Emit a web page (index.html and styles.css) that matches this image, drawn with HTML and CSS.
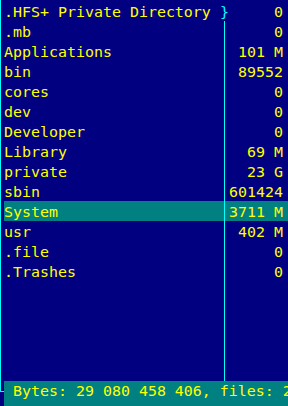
FILE: index.html
```html
<!DOCTYPE html>
<html lang="en">
<head>
 <meta charset="UTF-8">
 <meta name="viewport" content="width=device-width, initial-scale=1.0">
 <title>Panel</title>
 <link rel="stylesheet" href="styles.css">
</head>
<body>
 <div class="panel">
 <div class="row"><span class="name">.HFS+ Private Directory </span><span class="sep mark">}</span><span class="size">0</span></div>
 <div class="row"><span class="name">.mb</span><span class="sep"></span><span class="size">0</span></div>
 <div class="row"><span class="name">Applications</span><span class="sep"></span><span class="size">101 M</span></div>
 <div class="row"><span class="name">bin</span><span class="sep"></span><span class="size">89552</span></div>
 <div class="row"><span class="name">cores</span><span class="sep"></span><span class="size">0</span></div>
 <div class="row"><span class="name">dev</span><span class="sep"></span><span class="size">0</span></div>
 <div class="row"><span class="name">Developer</span><span class="sep"></span><span class="size">0</span></div>
 <div class="row"><span class="name">Library</span><span class="sep"></span><span class="size">69 M</span></div>
 <div class="row"><span class="name">private</span><span class="sep"></span><span class="size">23 G</span></div>
 <div class="row"><span class="name">sbin</span><span class="sep"></span><span class="size">601424</span></div>
 <div class="row selected"><span class="name">System</span><span class="sep"></span><span class="size">3711 M</span></div>
 <div class="row"><span class="name">usr</span><span class="sep"></span><span class="size">402 M</span></div>
 <div class="row"><span class="name">.file</span><span class="sep"></span><span class="size">0</span></div>
 <div class="row"><span class="name">.Trashes</span><span class="sep"></span><span class="size">0</span></div>
 <div class="row"><span class="name"></span><span class="sep"></span><span class="size"></span></div>
 <div class="row"><span class="name"></span><span class="sep"></span><span class="size"></span></div>
 <div class="row"><span class="name"></span><span class="sep"></span><span class="size"></span></div>
 <div class="row"><span class="name"></span><span class="sep"></span><span class="size"></span></div>
 <div class="row"><span class="name"></span><span class="sep"></span><span class="size"></span></div>
 </div>
 <div class="status-line">
 <div class="corner"></div>
 <div class="status"> Bytes: 29 080 458 406, files: 2 </div>
 </div>
</body>
</html>
```

FILE: styles.css
```css
body {
margin: 0;
width: 288px;
height: 406px;
overflow: hidden;
background-color: #000080;
color: #ffff00;
font-family: 'DejaVu Sans Mono', monospace;
font-size: 14.95px;
}
.panel {
height: 381px;
box-sizing: border-box;
border-left: 1px solid #00ffff;
padding: 1px 0 0 3px;
}
.row {
display: grid;
grid-template-columns: 216px 9px 54px 1fr;
height: 20px;
line-height: 22px;
white-space: pre;
}
.row.selected {
background-color: #008080;
}
.name {
overflow: hidden;
}
/* column divider, drawn in the middle of its cell */
.sep {
background: linear-gradient(#00ffff, #00ffff) no-repeat center / 1px 100%;
}
.sep.mark {
background: none;
color: #00ffff;
}
.size {
text-align: right;
}
.status-line {
display: flex;
height: 25px;
}
.corner {
width: 3px;
height: 10px;
border-left: 1px solid #00ffff;
border-bottom: 1px solid #00ffff;
}
.status {
flex: 1;
background-color: #008080;
line-height: 20px;
white-space: pre;
overflow: hidden;
}
```
